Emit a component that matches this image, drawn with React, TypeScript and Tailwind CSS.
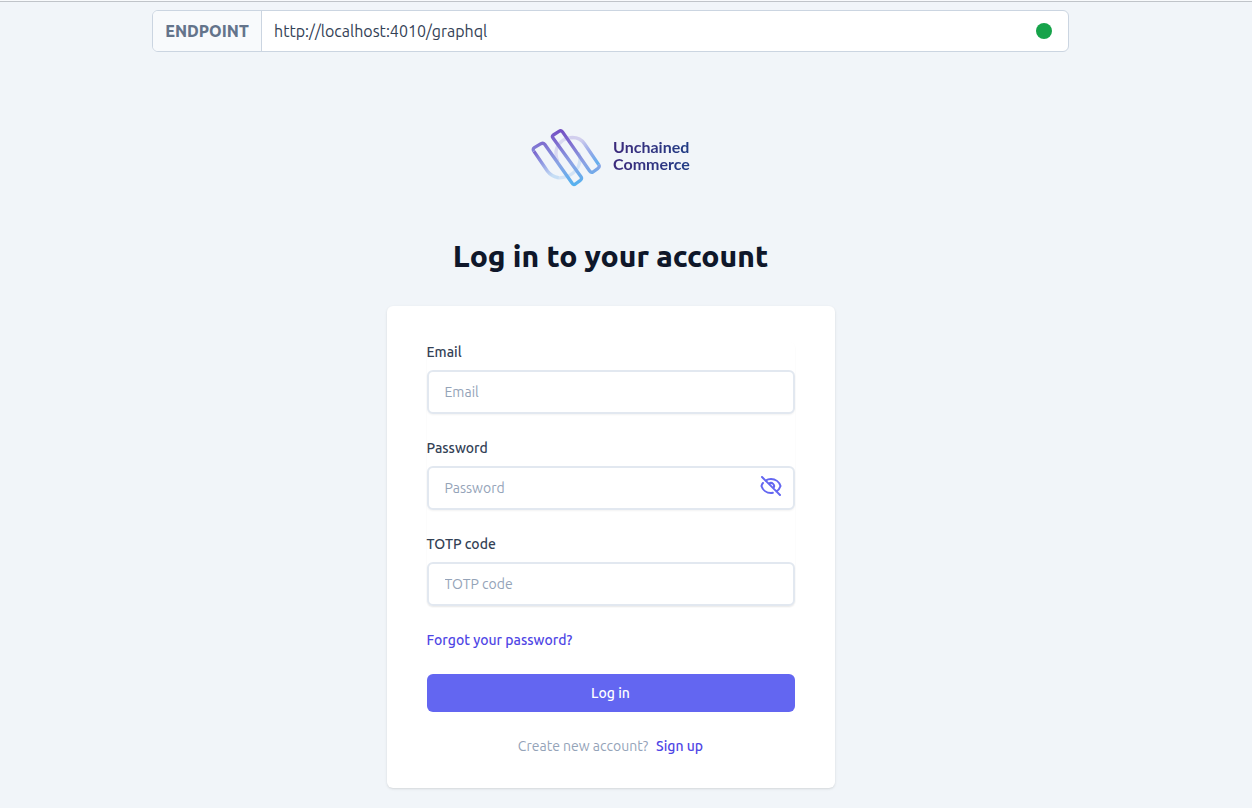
import { useState } from "react";

function LogoMark() {
  return (
    <svg viewBox="33 42 210 174" className="h-[58px] w-[70px]" fill="none" aria-hidden="true">
      <defs>
        <linearGradient id="chain" x1="0" y1="45" x2="0" y2="210" gradientUnits="userSpaceOnUse">
          <stop offset="0" stopColor="#7450c4" />
          <stop offset="0.25" stopColor="#7f6fd0" />
          <stop offset="0.6" stopColor="#8ba3e4" />
          <stop offset="1" stopColor="#55b2f0" />
        </linearGradient>
        <linearGradient id="leftFade" x1="40" y1="100" x2="92" y2="186" gradientUnits="userSpaceOnUse">
          <stop offset="0" stopColor="#7559c8" />
          <stop offset="0.5" stopColor="#8f98e2" />
          <stop offset="1" stopColor="#c6def5" />
        </linearGradient>
        <linearGradient id="rightFade" x1="238" y1="152" x2="180" y2="72" gradientUnits="userSpaceOnUse">
          <stop offset="0" stopColor="#5bb0ef" />
          <stop offset="0.5" stopColor="#94a8e8" />
          <stop offset="1" stopColor="#d2cfee" />
        </linearGradient>
      </defs>
      <g strokeWidth="10">
        <path d="M160 68C130 66 106 90 108 118C109 128 111 134 114 140" stroke="#dad9f1" />
        <path d="M110 188C150 192 178 165 180 135Q180 122 175 113" stroke="#d3e4f6" />
        <path d="M42 109L82 168C90 179 100 186 116 188" stroke="url(#leftFade)" />
        <path d="M236 149L194 87C184 72 168 66 150 68" stroke="url(#rightFade)" />
        <path
          d="M42 109Q37 102 43 98L63 86Q70 83 74 88L156 204Q160 211 166 207L181 196Q187 191 183 185L99 69Q95 64 100 60L117 49Q123 45 127 50L209 168Q213 174 219 171L234 160Q240 155 236 149"
          stroke="url(#chain)"
          strokeLinejoin="round"
        />
      </g>
    </svg>
  );
}

function EyeOffIcon() {
  return (
    <svg
      viewBox="0 0 24 24"
      className="size-6"
      fill="none"
      stroke="currentColor"
      strokeWidth="2"
      strokeLinecap="round"
      strokeLinejoin="round"
      aria-hidden="true"
    >
      <path d="M13.875 18.825A10.05 10.05 0 0112 19c-4.478 0-8.268-2.943-9.543-7a9.97 9.97 0 011.563-3.029m5.858.908a3 3 0 114.243 4.243M9.878 9.878l4.242 4.242M9.88 9.88l-3.29-3.29m7.532 7.532l3.29 3.29M3 3l3.59 3.59m0 0A9.953 9.953 0 0112 5c4.478 0 8.268 2.943 9.543 7a10.025 10.025 0 01-4.132 5.411m0 0L21 21" />
    </svg>
  );
}

const labelClass = "mb-2 block text-sm font-[550] text-[#334155]";

const inputClass =
  "block h-11 w-full rounded-md border-2 border-[#e2e8f0] bg-white px-4 text-sm text-slate-900 shadow-xs placeholder:text-[#94a3b8] focus:border-[#6366f1] focus:outline-none";

function Field({ id, label }: { id: string; label: string }) {
  return (
    <div>
      <label htmlFor={id} className={labelClass}>
        {label}
      </label>
      <input id={id} type="text" placeholder={label} className={inputClass} />
    </div>
  );
}

function PasswordField() {
  const [visible, setVisible] = useState(false);
  return (
    <div>
      <label htmlFor="password" className={labelClass}>
        Password
      </label>
      <div className="relative">
        <input
          id="password"
          type={visible ? "text" : "password"}
          placeholder="Password"
          className={inputClass}
        />
        <button
          type="button"
          aria-label="Toggle password visibility"
          onClick={() => setVisible(!visible)}
          className="absolute top-2 right-3 text-[#6366f1]"
        >
          <EyeOffIcon />
        </button>
      </div>
    </div>
  );
}

export default function App() {
  return (
    <div className="min-h-screen border-t border-slate-50 bg-[#f1f5f9] font-['Ubuntu','Noto_Sans',sans-serif] font-[430]">
      <div className="flex flex-col items-center border-t border-[#c0c4c9] pt-2 pr-[31px] pb-5">
        <div className="flex h-[42px] w-full max-w-[917px] items-stretch overflow-hidden rounded-md border border-[#cbd5e1] bg-white">
          <label
            htmlFor="endpoint"
            className="flex w-[109px] items-center justify-center border-r border-[#cbd5e1] bg-[#f8fafc] font-extrabold text-[#64748b]"
          >
            ENDPOINT
          </label>
          <input
            id="endpoint"
            defaultValue="http://localhost:4010/graphql"
            className="min-w-0 flex-1 px-3 text-[#334155] focus:outline-none"
          />
          <span className="mr-4 size-4 self-center rounded-full bg-[#16a34a]" />
        </div>

        <a
          href="#home"
          className="mt-[77px] flex items-center gap-3 font-['Lato',sans-serif] text-base leading-[17px] font-bold"
        >
          <LogoMark />
          <span className="mb-1.5 bg-linear-to-r from-[#3c2a7c] to-[#1f3c85] bg-clip-text text-transparent">
            Unchained
            <br />
            Commerce
          </span>
        </a>

        <h1 className="mt-[51px] text-3xl leading-9 font-extrabold text-[#0f172a]">Log in to your account</h1>

        <form
          onSubmit={(event) => event.preventDefault()}
          className="mt-8 w-full max-w-md rounded-md bg-white px-10 pt-9 pb-8 text-sm shadow-sm"
        >
          <div className="flex flex-col gap-6 rounded-md shadow-xs">
            <Field id="email" label="Email" />
            <PasswordField />
            <Field id="totp" label="TOTP code" />
          </div>
          <a href="#forgot" className="mt-6 block font-[550] text-[#4f46e5]">
            Forgot your password?
          </a>
          <button type="submit" className="mt-6 h-[38px] w-full rounded-md bg-[#6366f1] font-[550] text-white">
            Log in
          </button>
          <p className="mt-6 flex justify-center gap-2 text-[#94a3b8]">
            Create new account?
            <a href="#signup" className="font-[550] text-[#4f46e5]">
              Sign up
            </a>
          </p>
        </form>
      </div>
    </div>
  );
}
